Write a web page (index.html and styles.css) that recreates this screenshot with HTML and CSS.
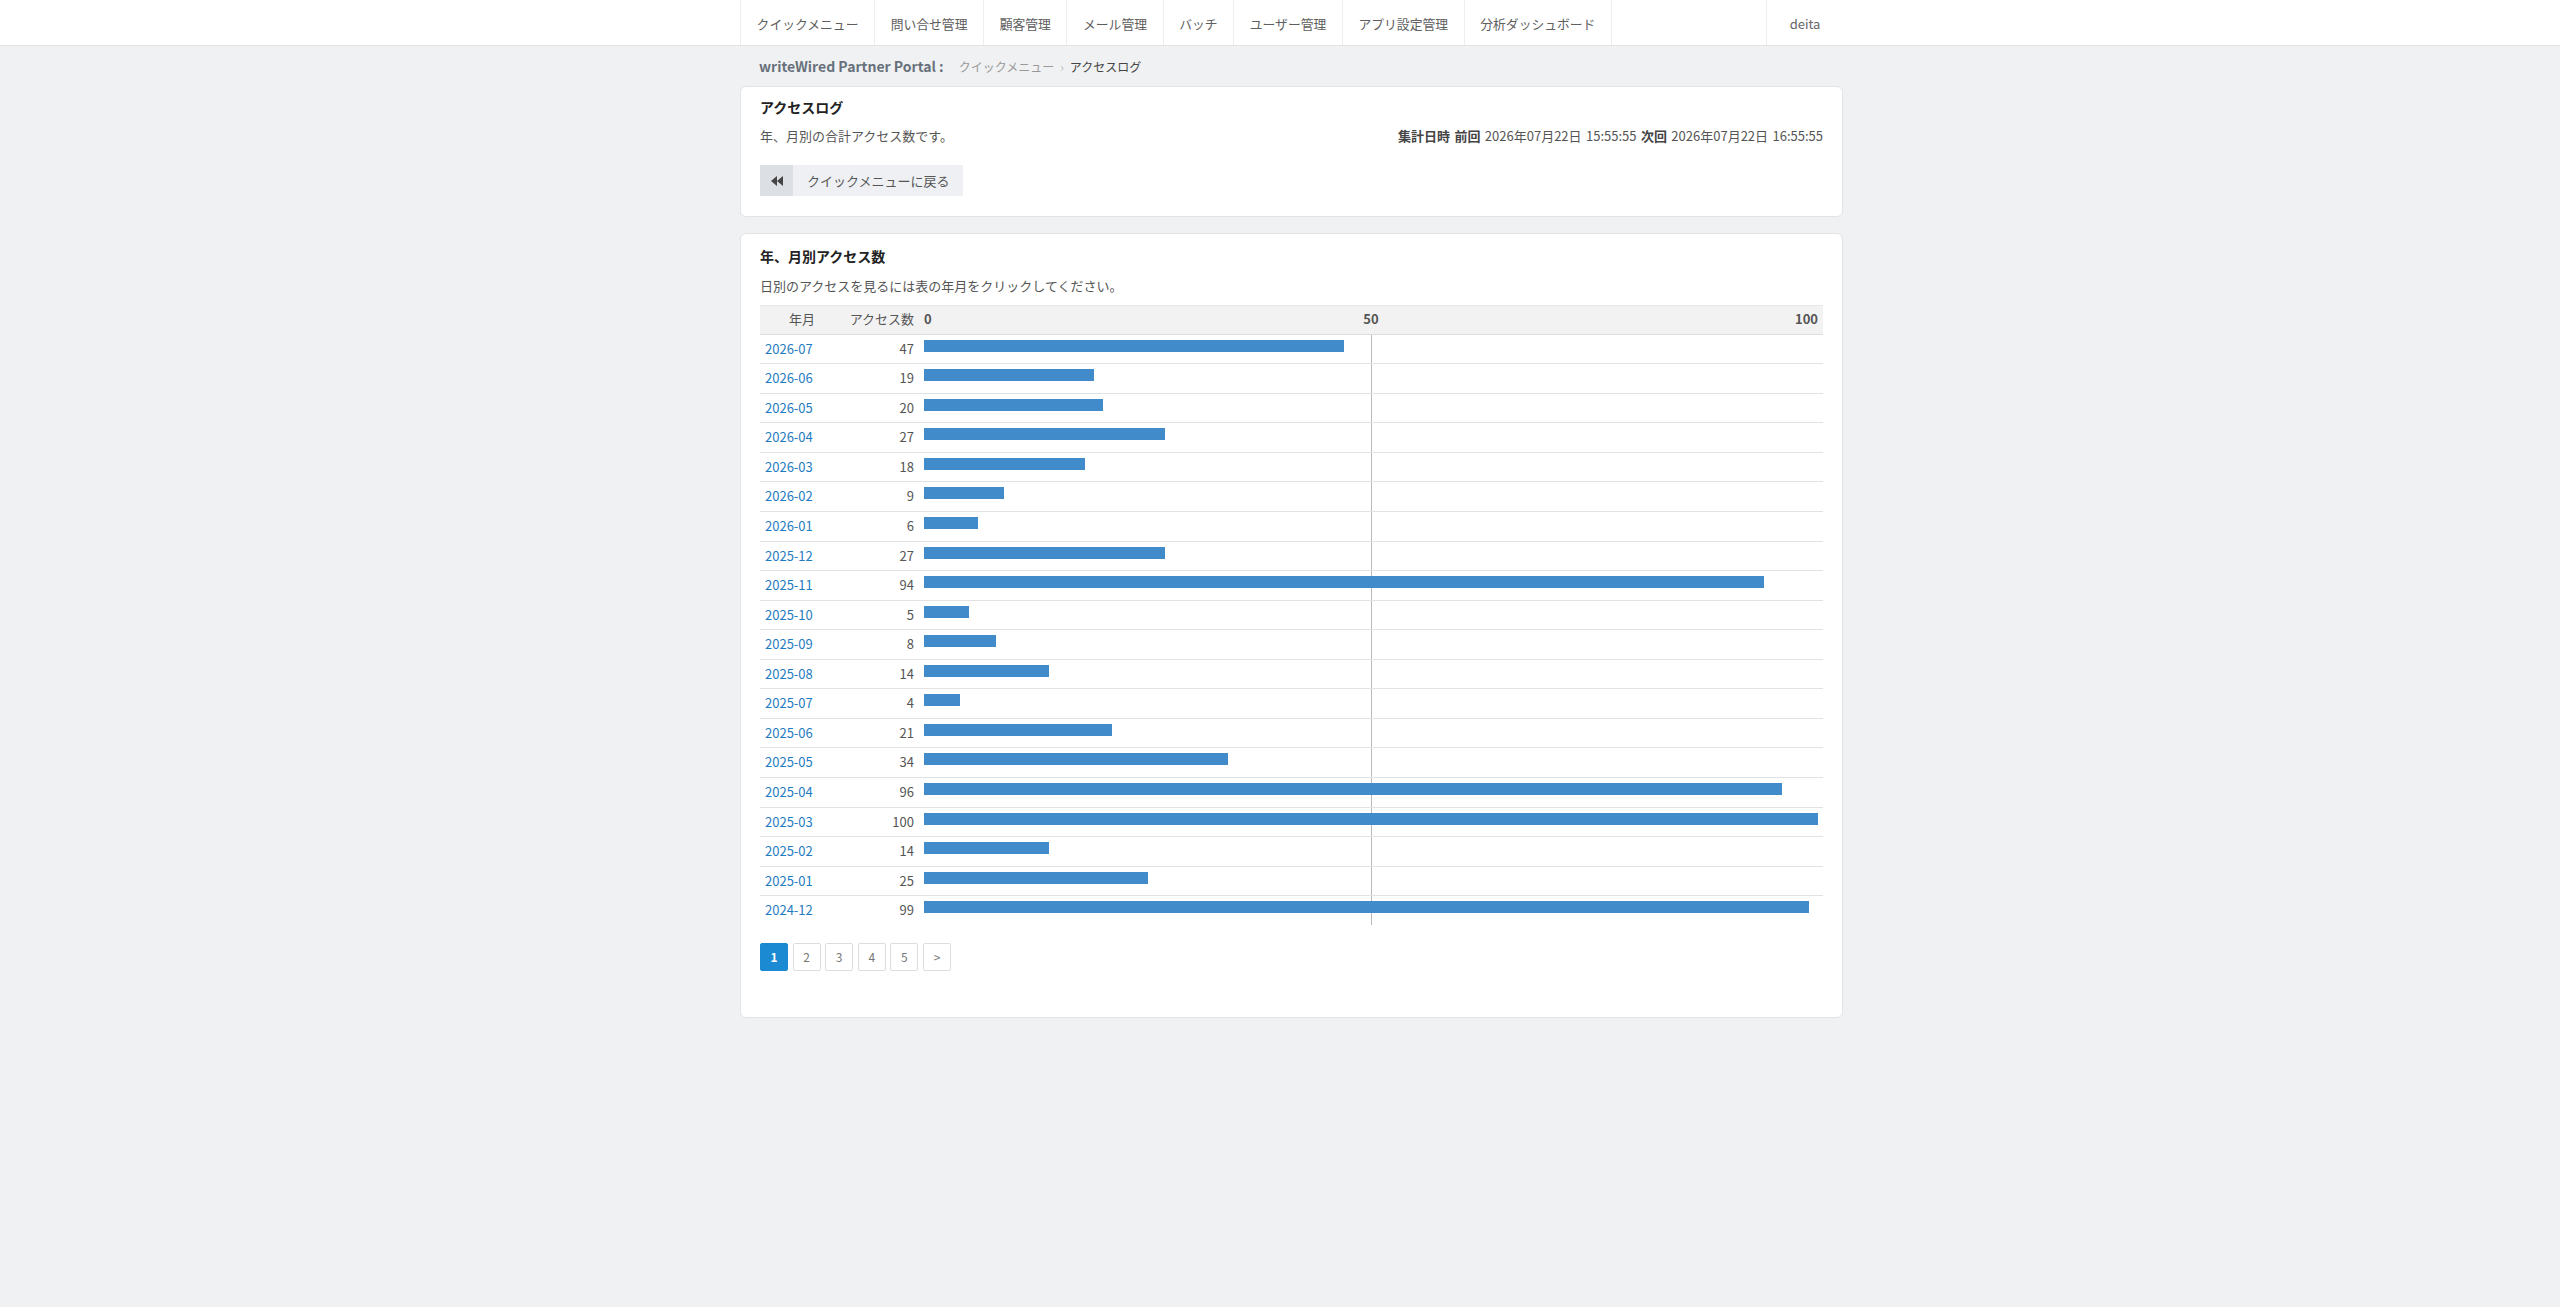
FILE: index.html
```html
<!DOCTYPE html>
<html lang="ja">
<head>
    <meta charset="UTF-8">
    <meta name="viewport" content="width=device-width, initial-scale=1.0">
    <title>アクセスログ - writeWired Partner Portal</title>
    <link rel="stylesheet" href="styles.css">
</head>
<body>
    <header class="topnav">
        <nav class="wrap">
            <a href="#" class="nav-item">クイックメニュー</a>
            <a href="#" class="nav-item">問い合せ管理</a>
            <a href="#" class="nav-item">顧客管理</a>
            <a href="#" class="nav-item">メール管理</a>
            <a href="#" class="nav-item">バッチ</a>
            <a href="#" class="nav-item">ユーザー管理</a>
            <a href="#" class="nav-item">アプリ設定管理</a>
            <a href="#" class="nav-item">分析ダッシュボード</a>
            <span class="nav-spacer"></span>
            <a href="#" class="nav-item nav-user">deita</a>
        </nav>
    </header>

    <main class="wrap">
        <div class="crumbs">
            <span class="portal">writeWired Partner Portal :</span>
            <a href="#" class="crumb-link">クイックメニュー</a>
            <span class="crumb-sep">›</span>
            <span class="crumb-current">アクセスログ</span>
        </div>

        <section class="card">
            <h2 class="card-title">アクセスログ</h2>
            <div class="card-lead">
                <span>年、月別の合計アクセス数です。</span>
                <span class="stamp"><b>集計日時</b> <b>前回</b> 2026年07月22日 15:55:55 <b>次回</b> 2026年07月22日 16:55:55</span>
            </div>
            <a href="#" class="back-btn">
                <span class="back-ico">
                    <svg width="12" height="10" viewBox="0 0 12 10"><path d="M6 0v10L0 5z M12 0v10L6 5z" fill="#444"/></svg>
                </span>
                <span class="back-txt">クイックメニューに戻る</span>
            </a>
        </section>

        <section class="card card-chart">
            <h2 class="card-title">年、月別アクセス数</h2>
            <div class="card-lead">
                <span>日別のアクセスを見るには表の年月をクリックしてください。</span>
            </div>

            <table class="access-table">
                <colgroup>
                    <col class="col-month">
                    <col class="col-count">
                    <col>
                </colgroup>
                <thead>
                    <tr>
                        <th>年月</th>
                        <th>アクセス数</th>
                        <th class="scale"><div class="scale-row"><span>0</span><span>50</span><span class="scale-end">100</span></div></th>
                    </tr>
                </thead>
                <tbody>
                    <tr><td><a href="#">2026-07</a></td><td class="num">47</td><td class="bar-cell"><div class="bar" style="width:47%"></div></td></tr>
                    <tr><td><a href="#">2026-06</a></td><td class="num">19</td><td class="bar-cell"><div class="bar" style="width:19%"></div></td></tr>
                    <tr><td><a href="#">2026-05</a></td><td class="num">20</td><td class="bar-cell"><div class="bar" style="width:20%"></div></td></tr>
                    <tr><td><a href="#">2026-04</a></td><td class="num">27</td><td class="bar-cell"><div class="bar" style="width:27%"></div></td></tr>
                    <tr><td><a href="#">2026-03</a></td><td class="num">18</td><td class="bar-cell"><div class="bar" style="width:18%"></div></td></tr>
                    <tr><td><a href="#">2026-02</a></td><td class="num">9</td><td class="bar-cell"><div class="bar" style="width:9%"></div></td></tr>
                    <tr><td><a href="#">2026-01</a></td><td class="num">6</td><td class="bar-cell"><div class="bar" style="width:6%"></div></td></tr>
                    <tr><td><a href="#">2025-12</a></td><td class="num">27</td><td class="bar-cell"><div class="bar" style="width:27%"></div></td></tr>
                    <tr><td><a href="#">2025-11</a></td><td class="num">94</td><td class="bar-cell"><div class="bar" style="width:94%"></div></td></tr>
                    <tr><td><a href="#">2025-10</a></td><td class="num">5</td><td class="bar-cell"><div class="bar" style="width:5%"></div></td></tr>
                    <tr><td><a href="#">2025-09</a></td><td class="num">8</td><td class="bar-cell"><div class="bar" style="width:8%"></div></td></tr>
                    <tr><td><a href="#">2025-08</a></td><td class="num">14</td><td class="bar-cell"><div class="bar" style="width:14%"></div></td></tr>
                    <tr><td><a href="#">2025-07</a></td><td class="num">4</td><td class="bar-cell"><div class="bar" style="width:4%"></div></td></tr>
                    <tr><td><a href="#">2025-06</a></td><td class="num">21</td><td class="bar-cell"><div class="bar" style="width:21%"></div></td></tr>
                    <tr><td><a href="#">2025-05</a></td><td class="num">34</td><td class="bar-cell"><div class="bar" style="width:34%"></div></td></tr>
                    <tr><td><a href="#">2025-04</a></td><td class="num">96</td><td class="bar-cell"><div class="bar" style="width:96%"></div></td></tr>
                    <tr><td><a href="#">2025-03</a></td><td class="num">100</td><td class="bar-cell"><div class="bar" style="width:100%"></div></td></tr>
                    <tr><td><a href="#">2025-02</a></td><td class="num">14</td><td class="bar-cell"><div class="bar" style="width:14%"></div></td></tr>
                    <tr><td><a href="#">2025-01</a></td><td class="num">25</td><td class="bar-cell"><div class="bar" style="width:25%"></div></td></tr>
                    <tr><td><a href="#">2024-12</a></td><td class="num">99</td><td class="bar-cell"><div class="bar" style="width:99%"></div></td></tr>
                </tbody>
            </table>

            <div class="pager">
                <a href="#" class="active">1</a>
                <a href="#">2</a>
                <a href="#">3</a>
                <a href="#">4</a>
                <a href="#">5</a>
                <a href="#">&gt;</a>
            </div>
        </section>
    </main>
</body>
</html>
```

FILE: styles.css
```css
* {
    box-sizing: border-box;
}

body {
    margin: 0;
    background-color: #f0f1f3;
    font-family: "Noto Sans CJK JP", "Noto Sans", sans-serif;
    font-size: 13px;
    color: #555;
}

a {
    text-decoration: none;
}

.wrap {
    width: 1103px;
    margin-left: calc(50% - 540px);
}

/* ヘッダーメニュー */
.topnav {
    background-color: #fff;
    border-bottom: 1px solid #e3e3e3;
}

.topnav .wrap {
    display: flex;
    height: 45px;
}

.nav-item {
    padding: 3px 15.6px 0;
    line-height: 42px;
    font-size: 12.8px;
    color: #5e5e5e;
    border-right: 1px solid #eee;
    white-space: nowrap;
}

.nav-item:first-child {
    border-left: 1px solid #eee;
}

.nav-spacer {
    flex-grow: 1;
}

.nav-user {
    width: 77px;
    padding: 3px 0 0;
    text-align: center;
    font-size: 13px;
    font-weight: normal;
    color: #666;
    border-right: none;
    border-left: 1px solid #eee;
}

/* パンくず */
.crumbs {
    height: 40px;
    display: flex;
    align-items: center;
    padding-left: 19px;
}

.crumbs .portal {
    font-size: 14px;
    font-weight: bold;
    color: #68717b;
    margin-right: 15px;
}

.crumb-link {
    font-size: 12px;
    color: #999;
}

.crumb-sep {
    font-size: 12px;
    color: #bbb;
    margin: 0 6px;
}

.crumb-current {
    font-size: 12px;
    color: #444;
}

/* カード */
.card {
    background-color: #fff;
    border: 1px solid #e2e3e5;
    border-radius: 6px;
    padding: 10px 19px 20px;
    margin-bottom: 16px;
}

.card-title {
    margin: 0 0 9px;
    font-size: 14px;
    line-height: 20px;
    font-weight: bold;
    color: #222;
}

.card-lead {
    display: flex;
    justify-content: space-between;
    line-height: 20px;
    margin-bottom: 19px;
}

.stamp {
    word-spacing: 1.5px;
}

.stamp b {
    color: #444;
}

.back-btn {
    display: inline-flex;
    height: 31px;
    background-color: #eef0f3;
    color: #555;
}

.back-ico {
    width: 33px;
    display: flex;
    align-items: center;
    justify-content: center;
    background-color: #dcdfe3;
}

.back-txt {
    padding: 0 14px;
    line-height: 31px;
}

.card-chart {
    padding-top: 12px;
}

.card-chart .card-title {
    margin-bottom: 10px;
}

.card-chart .card-lead {
    margin-bottom: 9px;
}

/* アクセス数テーブル */
.access-table {
    width: 100%;
    border-collapse: collapse;
    line-height: 1.42857;
}

.col-month {
    width: 60px;
}

.col-count {
    width: 99px;
}

.access-table th {
    padding: 4px 5px 5px;
    background-color: #f2f2f2;
    border-top: 1px solid #e6e6e6;
    border-bottom: 1px solid #ddd;
    font-weight: normal;
    text-align: right;
    color: #555;
}

.access-table th.scale {
    text-align: left;
    font-weight: bold;
}

.scale-row {
    display: grid;
    grid-template-columns: 1fr auto 1fr;
}

.scale-end {
    justify-self: end;
}

.access-table td {
    padding: 5px;
    border-top: 1px solid #e2e2e2;
}

.access-table td a {
    color: #1f7cc1;
}

.access-table td.num {
    text-align: right;
}

.access-table td.bar-cell {
    vertical-align: top;
    background: linear-gradient(#bbb, #bbb) no-repeat 50% 0 / 1px 100%;
}

.bar {
    height: 12px;
    background-color: #428bca;
}

/* ページャー */
.pager {
    display: flex;
    gap: 4.6px;
    margin: 18px 0 26px;
}

.pager a {
    width: 28px;
    height: 28px;
    line-height: 26px;
    text-align: center;
    font-size: 12px;
    color: #777;
    border: 1px solid #ddd;
    border-radius: 2px;
}

.pager a.active {
    background-color: #1b8ad3;
    border-color: #1b8ad3;
    color: #fff;
    font-weight: bold;
}
```
